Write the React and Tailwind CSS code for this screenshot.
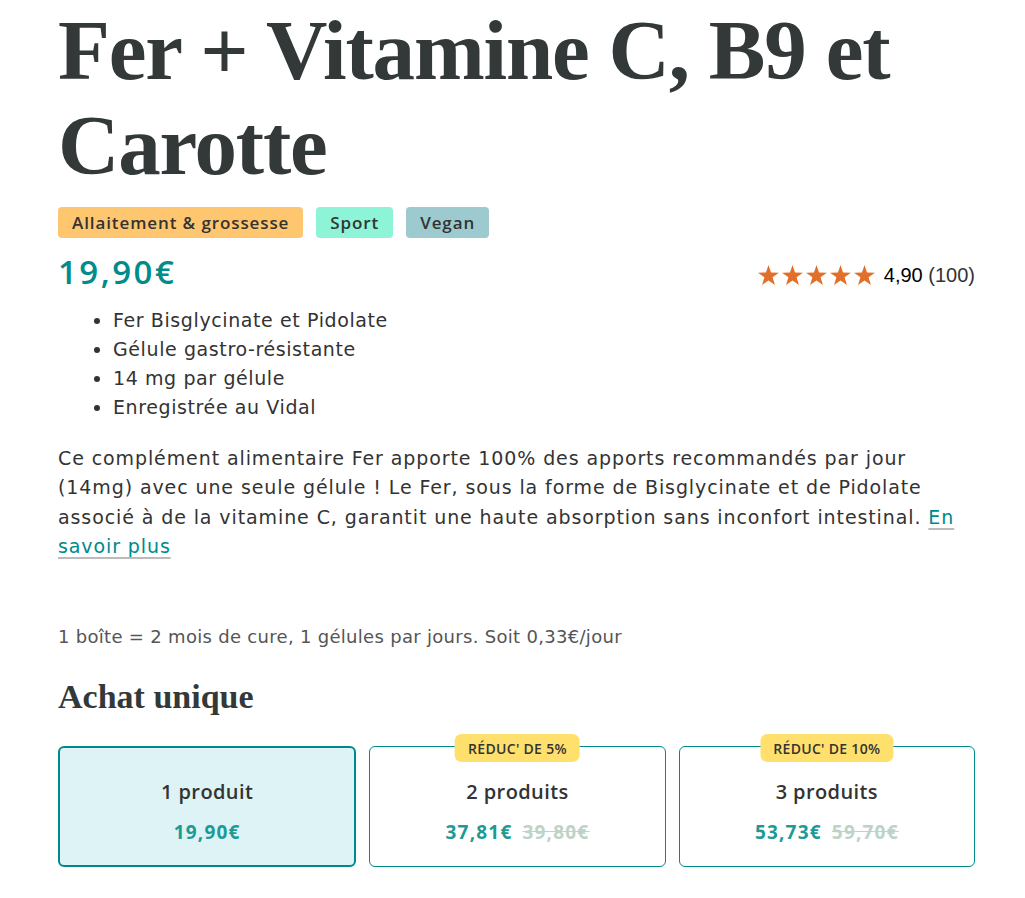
import React from "react";

const serif = { fontFamily: '"Liberation Serif", "DejaVu Serif", serif' };
const body = { fontFamily: '"DejaVu Sans", "Open Sans", sans-serif' };
const bold = { fontFamily: '"Open Sans", "Noto Sans", sans-serif' };

function Star() {
  return (
    <svg width="21" height="20" viewBox="0 0 24 23" className="shrink-0">
      <polygon
        points="12,0 14.9,8.6 24,8.8 16.7,14.2 19.4,23 12,17.7 4.6,23 7.3,14.2 0,8.8 9.1,8.6"
        fill="#E0702A"
      />
    </svg>
  );
}

function Card({ title, price, old, badge, selected }) {
  return (
    <div
      className={
        "relative flex-1 h-[121px] rounded-[6px] flex flex-col items-center " +
        (selected
          ? "border-2 border-[#00898A] bg-[#DDF3F5]"
          : "border border-[#00898A] bg-white")
      }
      style={bold}
    >
      {badge && (
        <div className="absolute left-1/2 -translate-x-1/2 -top-[13px] h-[28px] px-[13px] rounded-[7px] bg-[#FFE06C] flex items-center text-[14px] font-semibold text-[#333] whitespace-nowrap tracking-[0.3px]">
          {badge}
        </div>
      )}
      <div
        className={
          "text-[20px] font-semibold text-[#333] leading-[28px] tracking-[0.4px] " +
          (selected ? "mt-[30px]" : "mt-[31px]")
        }
      >
        {title}
      </div>
      <div className="mt-[13px] flex items-center gap-[10px] text-[19px] font-bold leading-[26px] tracking-[1.2px]">
        <span className="text-[#1E9A95]">{price}</span>
        {old && <span className="text-[#BDD3C6] line-through">{old}</span>}
      </div>
    </div>
  );
}

export default function App() {
  return (
    <div className="bg-white min-h-[898px] w-[1025px] overflow-hidden" style={body}>
      <div className="ml-[58px] w-[917px] pt-[3px]">
        <h1
          className="text-[85px] leading-[95px] font-bold text-[#333939] tracking-[-1.2px]"
          style={serif}
        >
          Fer + Vitamine C, B9 et Carotte
        </h1>

        <div className="mt-[14px] flex gap-[13px]" style={bold}>
          <span className="h-[31px] px-[14px] rounded-[4px] bg-[#FFC670] flex items-center text-[17px] font-semibold text-[#333] tracking-[0.9px]">
            Allaitement &amp; grossesse
          </span>
          <span className="h-[31px] px-[14px] rounded-[4px] bg-[#8DF4D7] flex items-center text-[17px] font-semibold text-[#333] tracking-[0.9px]">
            Sport
          </span>
          <span className="h-[31px] px-[14px] rounded-[4px] bg-[#9CCACF] flex items-center text-[17px] font-semibold text-[#333] tracking-[0.9px]">
            Vegan
          </span>
        </div>

        <div className="mt-[14px] flex items-center justify-between h-[40px]">
          <span
            className="text-[33px] font-semibold text-[#008C8A] leading-[40px] tracking-[2.5px]"
            style={bold}
          >
            19,90€
          </span>
          <div className="flex items-center gap-[3px] pt-[6px]">
            <Star />
            <Star />
            <Star />
            <Star />
            <Star />
            <span
              className="ml-[6px] text-[20px] text-black"
              style={{ fontFamily: '"Liberation Sans", Arial, sans-serif' }}
            >
              4,90 <span className="text-[#333]">(100)</span>
            </span>
          </div>
        </div>

        <ul className="mt-[14px] list-disc pl-[55px] text-[19px] leading-[29px] text-[#333] tracking-[0.6px]">
          <li>Fer Bisglycinate et Pidolate</li>
          <li>Gélule gastro-résistante</li>
          <li>14 mg par gélule</li>
          <li>Enregistrée au Vidal</li>
        </ul>

        <p className="mt-[22px] text-[19px] leading-[29.3px] text-[#333] tracking-[0.9px]">
          Ce complément alimentaire Fer apporte 100% des apports recommandés par jour (14mg) avec
          une seule gélule ! Le Fer, sous la forme de Bisglycinate et de Pidolate associé à de la
          vitamine C, garantit une haute absorption sans inconfort intestinal.{" "}
          <a className="text-[#00898A] underline decoration-[#bbb] underline-offset-[4px] decoration-2">
            En
          </a>{" "}
          <a className="text-[#00898A] underline decoration-[#bbb] underline-offset-[4px] decoration-2">
            savoir plus
          </a>
        </p>

        <p className="mt-[62px] text-[18px] leading-[27px] text-[#555] tracking-[0.3px]">
          1 boîte = 2 mois de cure, 1 gélules par jours. Soit 0,33€/jour
        </p>

        <h2
          className="mt-[27px] text-[34px] leading-[40px] font-bold text-[#333939]"
          style={serif}
        >
          Achat unique
        </h2>

        <div className="mt-[29px] flex gap-[13px]">
          <Card title="1 produit" price="19,90€" selected />
          <Card title="2 produits" price="37,81€" old="39,80€" badge="RÉDUC' DE 5%" />
          <Card title="3 produits" price="53,73€" old="59,70€" badge="RÉDUC' DE 10%" />
        </div>
      </div>
    </div>
  );
}
